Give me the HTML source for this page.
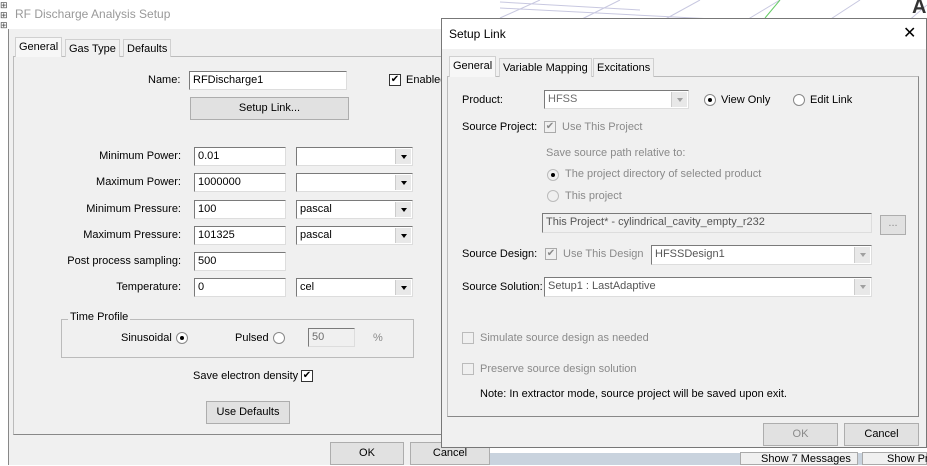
<!DOCTYPE html><html><head><style>
*{box-sizing:border-box}
body{margin:0;width:927px;height:465px;overflow:hidden;background:#fff;font-family:"Liberation Sans",sans-serif;font-size:11px;color:#000;position:relative}
.a{position:absolute;white-space:nowrap}
.in{position:absolute;background:#fff;border:1px solid #7a7a7a;border-right-color:#ddd;border-bottom-color:#ddd;padding:1px 3px;line-height:15px}
.dis{background:#f0f0f0;color:#6d6d6d}
.btn{position:absolute;background:#e1e1e1;border:1px solid #adadad;text-align:center;line-height:20px}
.sel{position:absolute;background:#fff;border:1px solid #7a7a7a;border-right-color:#ddd;border-bottom-color:#ddd;padding:1px 3px;line-height:15px}
.sel:after{content:"";position:absolute;right:1px;top:1px;bottom:1px;width:15px;background:#e8e8e8;border-left:1px solid #ccc}
.sel:before{content:"";position:absolute;right:5px;top:7px;border:3.5px solid transparent;border-top:4px solid #000;z-index:1}
.sel.d:before{border-top-color:#a0a0a0}
.cb{position:absolute;width:12px;height:12px;border:1px solid #333;background:#fff;font-size:10px;line-height:10px;text-align:center}
.rd{position:absolute;width:12px;height:12px;border-radius:50%;border:1px solid #888;background:#fff}
.rd.on:after{content:"";position:absolute;left:3px;top:3px;width:4px;height:4px;border-radius:50%;background:#000}
.g{color:#8a8a8a}
.tab{position:absolute;border:1px solid #d0d0d0;border-bottom:none;background:#f0f0f0;padding:0 3px;line-height:18px}
</style></head><body>
<svg class="a" style="left:440px;top:0" width="487" height="60"><g stroke="#c8c8e0" stroke-width="1" fill="none">
<path d="M60 8 L487 30 M60 2 L200 10 M100 0 L60 18 M180 0 L140 20 M260 0 L220 22 M340 0 L300 24 M420 0 L380 26 M487 5 L460 28"/></g><path d="M340 0 L325 18" stroke="#6c6" /></svg>
<div class="a" style="left:912px;top:-4px;font-size:20px;font-weight:bold;color:#333">A</div>
<div class="a" style="left:0;top:0;width:8px;height:40px;color:#444;font-size:9px;line-height:10px">⊞<br>⊞<br>⊞</div>
<div class="a" style="left:490px;top:453px;width:437px;height:12px;background:#c9d3de"></div>
<div class="a" style="left:740px;top:452px;width:118px;height:13px;background:#f0f0f0;border:1px solid #aaa;padding-left:20px;line-height:13px">Show 7 Messages</div>
<div class="a" style="left:862px;top:452px;width:65px;height:13px;background:#f0f0f0;border:1px solid #aaa;padding-left:24px;line-height:13px">Show Pr</div>
<div class="a" style="left:8px;top:0;width:482px;height:465px;background:#f0f0f0;border-left:1px solid #888"></div>
<div class="a" style="left:8px;top:0;width:482px;height:29px;background:#fff"></div>
<div class="a" style="left:15px;top:7px;font-size:12px;color:#999">RF Discharge Analysis Setup</div>
<div class="a" style="left:13px;top:56px;width:470px;height:379px;border:1px solid #bbb;border-bottom:1px solid #888"></div>
<div class="tab" style="left:15px;top:37px;height:20px;background:#f7f7f7">General</div>
<div class="tab" style="left:65px;top:39px;height:18px">Gas Type</div>
<div class="tab" style="left:123px;top:39px;height:18px">Defaults</div>
<div class="a" style="left:148px;top:74px">Name:</div>
<div class="in" style="left:189px;top:71px;width:158px;height:19px">RFDischarge1</div>
<div class="cb" style="left:389px;top:74px">✔</div><div class="a" style="left:406px;top:74px">Enabled</div>
<div class="btn" style="left:190px;top:97px;width:159px;height:23px">Setup Link...</div>
<div class="a" style="left:0;top:143px;width:181px;text-align:right;line-height:26.3px">Minimum Power:<br>Maximum Power:<br>Minimum Pressure:<br>Maximum Pressure:<br>Post process sampling:<br>Temperature:</div>
<div class="in" style="left:194px;top:147px;width:92px;height:19px">0.01</div>
<div class="in" style="left:194px;top:173px;width:92px;height:19px">1000000</div>
<div class="in" style="left:194px;top:200px;width:92px;height:19px">100</div>
<div class="in" style="left:194px;top:226px;width:92px;height:19px">101325</div>
<div class="in" style="left:194px;top:252px;width:92px;height:19px">500</div>
<div class="in" style="left:194px;top:278px;width:92px;height:19px">0</div>
<div class="sel" style="left:296px;top:147px;width:117px;height:19px"></div>
<div class="sel" style="left:296px;top:173px;width:117px;height:19px"></div>
<div class="sel" style="left:296px;top:200px;width:117px;height:19px">pascal</div>
<div class="sel" style="left:296px;top:226px;width:117px;height:19px">pascal</div>
<div class="sel" style="left:296px;top:278px;width:117px;height:19px">cel</div>
<div class="a" style="left:61px;top:319px;width:353px;height:39px;border:1px solid #bbb"></div>
<div class="a" style="left:68px;top:311px;background:#f0f0f0;padding:0 2px">Time Profile</div>
<div class="a" style="left:121px;top:332px">Sinusoidal</div><div class="rd on" style="left:176px;top:332px"></div>
<div class="a" style="left:235px;top:332px">Pulsed</div><div class="rd" style="left:273px;top:332px"></div>
<div class="in dis" style="left:308px;top:328px;width:47px;height:19px">50</div>
<div class="a g" style="left:373px;top:332px">%</div>
<div class="a" style="left:193px;top:370px">Save electron density</div><div class="cb" style="left:301px;top:370px">✔</div>
<div class="btn" style="left:206px;top:401px;width:84px;height:23px">Use Defaults</div>
<div class="btn" style="left:330px;top:442px;width:74px;height:23px">OK</div>
<div class="btn" style="left:410px;top:442px;width:80px;height:23px">Cancel</div>
<div class="a" style="left:441px;top:18px;width:486px;height:430px;background:#f0f0f0;border:1px solid #777"></div>
<div class="a" style="left:442px;top:19px;width:484px;height:30px;background:#fff"></div>
<div class="a" style="left:449px;top:27px;font-size:12px">Setup Link</div>
<div class="a" style="left:903px;top:23px;font-size:16px;font-weight:300">✕</div>
<div class="a" style="left:447px;top:76px;width:472px;height:341px;border:1px solid #bbb;border-bottom:1px solid #888;border-right:1px solid #888"></div>
<div class="tab" style="left:449px;top:56px;height:21px;background:#f7f7f7">General</div>
<div class="tab" style="left:499px;top:58px;height:19px">Variable Mapping</div>
<div class="tab" style="left:593px;top:58px;height:19px">Excitations</div>
<div class="a" style="left:462px;top:94px">Product:</div>
<div class="sel d dis" style="left:544px;top:90px;width:145px;height:19px">HFSS</div>
<div class="rd on" style="left:704px;top:94px"></div><div class="a" style="left:721px;top:94px">View Only</div>
<div class="rd" style="left:793px;top:94px"></div><div class="a" style="left:810px;top:94px">Edit Link</div>
<div class="a" style="left:462px;top:121px">Source Project:</div>
<div class="cb g" style="left:544px;top:121px;border-color:#aaa;background:#f0f0f0">✔</div><div class="a g" style="left:562px;top:121px">Use This Project</div>
<div class="a g" style="left:546px;top:147px">Save source path relative to:</div>
<div class="rd on" style="left:547px;top:169px;background:#f0f0f0;border-color:#bbb"></div><div class="a g" style="left:565px;top:168px">The project directory of selected product</div>
<div class="rd" style="left:547px;top:190px;background:#f0f0f0;border-color:#bbb"></div><div class="a g" style="left:565px;top:190px">This project</div>
<div class="in dis" style="left:542px;top:213px;width:330px;height:20px;color:#555">This Project* - cylindrical_cavity_empty_r232</div>
<div class="btn g" style="left:880px;top:215px;width:26px;height:20px;line-height:14px">...</div>
<div class="a" style="left:462px;top:248px">Source Design:</div>
<div class="cb g" style="left:545px;top:248px;border-color:#aaa;background:#f0f0f0">✔</div><div class="a g" style="left:563px;top:248px">Use This Design</div>
<div class="sel d dis" style="left:651px;top:245px;width:221px;height:20px;color:#555">HFSSDesign1</div>
<div class="a" style="left:462px;top:281px">Source Solution:</div>
<div class="sel d dis" style="left:544px;top:277px;width:328px;height:20px;color:#555">Setup1 : LastAdaptive</div>
<div class="cb" style="left:462px;top:332px;border-color:#bbb;background:#f0f0f0"></div><div class="a g" style="left:480px;top:332px">Simulate source design as needed</div>
<div class="cb" style="left:462px;top:363px;border-color:#bbb;background:#f0f0f0"></div><div class="a g" style="left:480px;top:363px">Preserve source design solution</div>
<div class="a" style="left:480px;top:388px">Note: In extractor mode, source project will be saved upon exit.</div>
<div class="btn g" style="left:763px;top:423px;width:75px;height:23px">OK</div>
<div class="btn" style="left:844px;top:423px;width:75px;height:23px">Cancel</div>
</body></html>
